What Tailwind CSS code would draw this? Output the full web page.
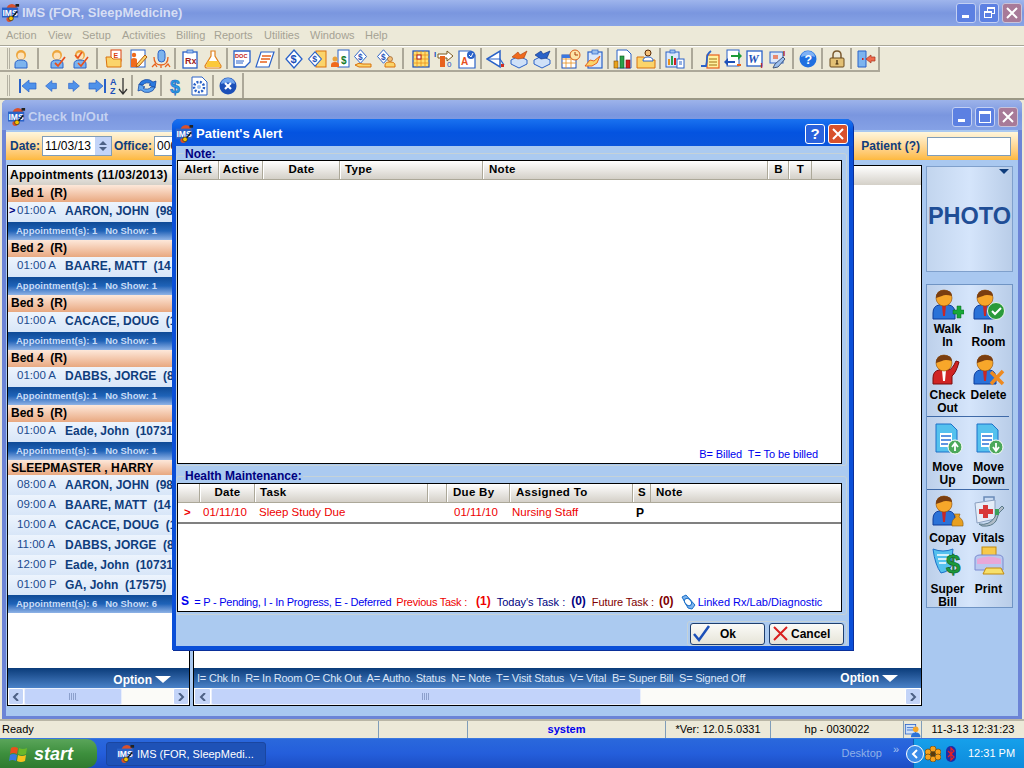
<!DOCTYPE html>
<html lang="en">
<head>
<meta charset="UTF-8">
<title>IMS (FOR, SleepMedicine)</title>
<script src="https://cdn.jsdelivr.net/npm/@tailwindcss/browser@4"></script>
</head>
<body class="bg-[#ece9d8]">
<!-- shared icons -->
<svg class="hidden" width="0" height="0">
  <defs>
    <symbol id="ims" viewBox="0 0 20 20"><circle cx="11" cy="6" r="6" fill="#d9512c"/><circle cx="8" cy="17" r="3" fill="#d9512c"/><rect x="0" y="4" width="18" height="11" fill="#2a62c8"/><text x="0.5" y="13.5" font-size="9.5" font-weight="700" fill="#fff" font-family="Liberation Sans">IMS</text><circle cx="10" cy="16" r="2.6" fill="#f5c400" stroke="#222" stroke-width=".7"/><path d="M12 14l5-6" stroke="#111" stroke-width="1.6"/><rect x="15" y="0" width="4" height="3" fill="#222"/></symbol>
    <symbol id="nurse" viewBox="0 0 20 20"><circle cx="10" cy="6" r="5" fill="#eda63e"/><circle cx="10" cy="7" r="3.4" fill="#fde3ba"/><path d="M4 19v-4q0-4 6-4t6 4v4z" fill="#7db4ee" stroke="#2a62c8"/></symbol>
    <symbol id="nursecheck" viewBox="0 0 20 20"><use href="#nurse"/><path d="M8 14l3 3 7-9" fill="none" stroke="#e8501c" stroke-width="1.8"/></symbol>
    <symbol id="nursecheck2" viewBox="0 0 20 20"><use href="#nurse"/><path d="M5 6l3 3 4-6M8 14l3 3 7-9" fill="none" stroke="#e8501c" stroke-width="1.6"/></symbol>
    <symbol id="folder" viewBox="0 0 20 20"><rect x="6" y="1" width="10" height="11" fill="#fff" stroke="#d9400d"/><text x="8.5" y="9" font-size="7" font-weight="700" fill="#d9400d" font-family="Liberation Sans">E</text><path d="M1 8h5l2 2h8v8H2z" fill="#fbd46a" stroke="#d9730d"/></symbol>
    <symbol id="personpen" viewBox="0 0 20 20"><rect x="3" y="1" width="14" height="17" fill="#fff" stroke="#2a62c8"/><circle cx="6" cy="6" r="2.2" fill="#f06a1c"/><path d="M3 18V11q0-2 3-2t3 2v7z" fill="#f06a1c"/><path d="M9 15l8-9 2 2-8 9-3 1z" fill="#fbd46a" stroke="#b4590d"/></symbol>
    <symbol id="mic" viewBox="0 0 20 20"><rect x="7" y="1" width="7" height="12" rx="3.5" fill="#7db4ee" stroke="#2a62c8"/><path d="M3 8q0 8 7 8t7-8M10 16v3M1 18l3-3 2 3M14 18l3-3 2 3" fill="none" stroke="#e8621c" stroke-width="1.3"/></symbol>
    <symbol id="rx" viewBox="0 0 20 20"><rect x="3" y="3" width="14" height="16" fill="#fff" stroke="#2a62c8" stroke-width="1.3"/><rect x="7" y="1" width="6" height="3" fill="#9dc0ee" stroke="#2a62c8" stroke-width=".7"/><text x="5" y="15" font-size="9" font-weight="700" fill="#a01c1c" font-family="Liberation Sans">Rx</text></symbol>
    <symbol id="flask" viewBox="0 0 20 20"><path d="M8 2h4v5l6 10q0 2-2 2H4q-2 0-2-2L8 7z" fill="#fff" stroke="#e0801c" stroke-width="1.2"/><path d="M5 12h10l2.500 5q0 1-1 1H4q-1 0-1-1z" fill="#fbc93a"/></symbol>
    <symbol id="doc" viewBox="0 0 20 20"><path d="M2 2h16v11l-5 5H2z" fill="#fff" stroke="#2a62c8" stroke-width="1.3"/><text x="3" y="9" font-size="5.600" font-weight="700" fill="#c02020" font-family="Liberation Sans">DOC</text><path d="M4 12h8M4 14h7" stroke="#2a62c8"/></symbol>
    <symbol id="note" viewBox="0 0 20 20"><path d="M6 3h13l-5 15H1z" fill="#fff" stroke="#2a62c8" stroke-width="1.200"/><path d="M7 7h9M6 10h9M5 13h7" stroke="#e8621c" stroke-width="1.300"/></symbol>
    <symbol id="ddiamond" viewBox="0 0 20 20"><path d="M10 1l8 9-8 9-8-9z" fill="#fff" stroke="#2a62c8" stroke-width="1.300"/><text x="6.500" y="14" font-size="11" font-weight="700" fill="#1c50b8" font-family="Liberation Sans">$</text></symbol>
    <symbol id="ddoc" viewBox="0 0 20 20"><rect x="9" y="2" width="10" height="16" fill="#fbd46a" stroke="#d9730d"/><use href="#ddiamond" width="16" height="18" y="1"/></symbol>
    <symbol id="pdollar" viewBox="0 0 20 20"><rect x="8" y="1" width="11" height="17" fill="#fff" stroke="#2a62c8"/><text x="11" y="15" font-size="10" font-weight="700" fill="#137a2a" font-family="Liberation Sans">$</text><circle cx="5" cy="10" r="2.500" fill="#e8a33d"/><path d="M1 18v-2q0-3 4-3t4 3v2z" fill="#f06a1c"/></symbol>
    <symbol id="dhand" viewBox="0 0 20 20"><use href="#ddiamond" width="15" height="15"/><path d="M2 16q4-3 8-1h8v3H6z" fill="#fbd46a" stroke="#d9730d"/></symbol>
    <symbol id="dperson" viewBox="0 0 20 20"><use href="#ddiamond" width="15" height="15"/><circle cx="14" cy="10" r="2.500" fill="#f4c078" stroke="#8a4a10" stroke-width=".6"/><path d="M9 18v-2q0-3 5-3t5 3v2z" fill="#fbd46a" stroke="#d9730d"/></symbol>
    <symbol id="grid" viewBox="0 0 20 20"><rect x="2" y="2" width="16" height="16" fill="#ffdf70" stroke="#1c50b8" stroke-width="1.200"/><path d="M2 6h16M2 10h16M2 14h16M6 2v16M10 2v16M14 2v16" stroke="#e8901c" stroke-width=".8"/><rect x="6" y="6" width="4" height="4" fill="#fff" stroke="#b01c1c"/></symbol>
    <symbol id="flow" viewBox="0 0 20 20"><text x="0" y="8" font-size="8" font-weight="700" fill="#1c50b8" font-family="Liberation Sans">I</text><text x="13" y="18" font-size="8" fill="#1c50b8" font-family="Liberation Sans">0</text><path d="M4 5h9V2l6 5-6 5V9H4z" fill="#fff" stroke="#7a5a20"/><rect x="6" y="7" width="5" height="11" fill="#e8621c"/></symbol>
    <symbol id="adoc" viewBox="0 0 20 20"><path d="M2 2h12l4 4v13H2z" fill="#fff" stroke="#2a62c8" stroke-width="1.200"/><text x="4" y="16" font-size="10" font-weight="700" fill="#e8501c" font-family="Liberation Sans">A</text><circle cx="14" cy="6" r="4" fill="#2a62c8"/><path d="M12 6l2 2 2-4" stroke="#fff" fill="none"/></symbol>
    <symbol id="envelope" viewBox="0 0 20 20"><path d="M1 10L14 2v16z" fill="#fff" stroke="#2a62c8" stroke-width="1.500"/><path d="M1 10h13l4 6" fill="none" stroke="#2a62c8" stroke-width="1.200"/><rect x="15" y="15" width="3" height="3" fill="#d03020"/></symbol>
    <symbol id="box1" viewBox="0 0 20 20"><path d="M10 7l8 4v4l-8 4-8-4v-4z" fill="#cfe1f8" stroke="#2a62c8"/><path d="M3 8l6-5 2 3 7-4-3 7-6 1z" fill="#f06a1c" stroke="#a83c08" stroke-width=".6"/></symbol>
    <symbol id="box2" viewBox="0 0 20 20"><path d="M10 7l8 4v4l-8 4-8-4v-4z" fill="#cfe1f8" stroke="#2a62c8"/><path d="M3 6l6-4 2 3 7-3-3 7-6 1z" fill="#2a62c8" stroke="#0c2d7a" stroke-width=".6"/></symbol>
    <symbol id="calclock" viewBox="0 0 20 20"><rect x="1" y="6" width="14" height="13" fill="#fff" stroke="#1c50b8"/><path d="M1 10h14M1 14h14M5 6v13M10 6v13" stroke="#e8901c" stroke-width=".8"/><rect x="1" y="6" width="14" height="3" fill="#3a78e0"/><circle cx="14" cy="6" r="5" fill="#fde4a8" stroke="#d9601c"/><path d="M14 3v3h3" stroke="#a83c08" fill="none"/></symbol>
    <symbol id="clip" viewBox="0 0 20 20"><rect x="4" y="3" width="14" height="16" fill="#dbe8fa" stroke="#2a62c8" stroke-width="1.200"/><rect x="8" y="1" width="6" height="4" fill="#9dc0ee" stroke="#2a62c8" stroke-width=".7"/><path d="M1 17l5-6 4 1 6-5-3 7-5 3z" fill="#fbd46a" stroke="#e8621c"/></symbol>
    <symbol id="chart" viewBox="0 0 20 20"><path d="M4 1h10l4 4v14H4z" fill="#fff" stroke="#2a62c8"/><rect x="1" y="12" width="4" height="7" fill="#e8a31c" stroke="#7a4a08" stroke-width=".6"/><rect x="7" y="7" width="4" height="12" fill="#2aa04a" stroke="#0b5a1f" stroke-width=".6"/><rect x="13" y="11" width="4" height="8" fill="#d02020" stroke="#7a0c0c" stroke-width=".6"/></symbol>
    <symbol id="fperson" viewBox="0 0 20 20"><path d="M1 8h7l2 3h9v8H1z" fill="#fbd46a" stroke="#d9730d"/><circle cx="12" cy="4" r="3" fill="#f4c078" stroke="#5a2a08"/><path d="M7 12q0-4 5-4t5 4z" fill="#fff" stroke="#2a62c8"/></symbol>
    <symbol id="clipchart" viewBox="0 0 20 20"><rect x="1" y="3" width="13" height="15" fill="#dbe8fa" stroke="#2a62c8"/><rect x="5" y="1" width="5" height="3" fill="#9dc0ee" stroke="#2a62c8" stroke-width=".7"/><rect x="3" y="10" width="2" height="6" fill="#e8901c"/><rect x="6" y="7" width="2" height="9" fill="#2aa04a"/><rect x="9" y="9" width="2" height="7" fill="#d02020"/><rect x="12" y="10" width="7" height="9" fill="#fff" stroke="#2a62c8"/><path d="M14 13h3M14 15h3" stroke="#2a62c8"/></symbol>
    <symbol id="hookdoc" viewBox="0 0 20 20"><rect x="7" y="6" width="12" height="13" fill="#fff2a0" stroke="#e8601c" stroke-width="1.200"/><path d="M9 10h8M9 13h8M9 16h8" stroke="#a07010"/><path d="M1 17h5q1-4 1-8t4-7" fill="none" stroke="#2a62c8" stroke-width="1.800"/></symbol>
    <symbol id="arrows" viewBox="0 0 20 20"><rect x="4" y="1" width="12" height="16" fill="#fff" stroke="#2a62c8"/><path d="M8 6h7V3l4 4-4 4V8H8z" fill="#1c9a3a"/><path d="M12 12H5V9l-4 4 4 4v-3h7z" fill="#1c50b8"/><rect x="14" y="15" width="4" height="2" fill="#e8601c"/></symbol>
    <symbol id="word" viewBox="0 0 20 20"><rect x="1" y="2" width="15" height="15" fill="#fff" stroke="#2a62c8" stroke-width="1.300"/><text x="2" y="14" font-size="12" font-weight="700" font-style="italic" fill="#1c50b8" font-family="Liberation Serif">W</text><text x="14.500" y="19" font-size="8" font-weight="700" fill="#c02020" font-family="Liberation Sans">I</text></symbol>
    <symbol id="paint" viewBox="0 0 20 20"><rect x="1" y="3" width="13" height="11" fill="#dbe8fa" stroke="#2a62c8"/><rect x="4" y="6" width="5" height="4" fill="#e88a70"/><path d="M4 19l2-4 8-7 2 2-7 8z" fill="#9dc0ee" stroke="#44587a"/><text x="14" y="7" font-size="8" font-weight="700" fill="#c02020" font-family="Liberation Sans">I</text></symbol>
    <symbol id="help" viewBox="0 0 20 20"><circle cx="10" cy="10" r="8.500" fill="#1f6fe0"/><path d="M3 8a7 6 0 0 1 14 0q-7-3-14 0" fill="#7fb2f5"/><text x="6.600" y="15" font-size="12.500" font-weight="700" fill="#fff" font-family="Liberation Sans">?</text></symbol>
    <symbol id="lock" viewBox="0 0 20 20"><path d="M6 9V6q0-4 4-4t4 4v3" fill="none" stroke="#7a5a30" stroke-width="1.500"/><rect x="3" y="9" width="14" height="9" rx="1" fill="#e3c074" stroke="#6a4a1c"/><path d="M10 11v4M8.500 15h3" stroke="#3a2408" stroke-width="1.200"/></symbol>
    <symbol id="door" viewBox="0 0 20 20"><path d="M2 2h8v16H2z" fill="#7db4ee" stroke="#2a62c8"/><rect x="6" y="9" width="1.500" height="2" fill="#d02020"/><path d="M10 10l5-4v2h4v4h-4v2z" fill="#f06a4c" stroke="#a8301c" stroke-width=".7"/></symbol>
    <symbol id="first" viewBox="0 0 20 20"><rect x="1" y="3" width="2" height="14" fill="#2a62c8"/><path d="M4 10l7-6v3h7v6h-7v3z" fill="#4f92ea" stroke="#2a62c8" stroke-width=".7"/></symbol>
    <symbol id="prev" viewBox="0 0 20 20"><path d="M4 10l7-6v3h5v6h-5v3z" fill="#4f92ea" stroke="#2a62c8" stroke-width=".7"/></symbol>
    <symbol id="next" viewBox="0 0 20 20"><path d="M16 10L9 4v3H4v6h5v3z" fill="#4f92ea" stroke="#2a62c8" stroke-width=".7"/></symbol>
    <symbol id="last" viewBox="0 0 20 20"><rect x="17" y="3" width="2" height="14" fill="#2a62c8"/><path d="M16 10L9 4v3H2v6h7v3z" fill="#4f92ea" stroke="#2a62c8" stroke-width=".7"/></symbol>
    <symbol id="sort" viewBox="0 0 20 20"><text x="1" y="9" font-size="9" font-weight="700" fill="#1c50b8" font-family="Liberation Sans">A</text><text x="1" y="18" font-size="9" font-weight="700" fill="#1c50b8" font-family="Liberation Sans">Z</text><path d="M14 2v15M10 13l4 5 4-5" fill="none" stroke="#333" stroke-width="1.300"/></symbol>
    <symbol id="refresh" viewBox="0 0 20 20"><path d="M2 9a8 7 0 0 1 14-3l3-1-1 7-6-3 2-1a5 4 0 0 0-8 1z" fill="#2a7ae0" stroke="#0c3d9a" stroke-width=".7"/><path d="M18 11a8 7 0 0 1-14 3l-3 1 1-7 6 3-2 1a5 4 0 0 0 8-1z" fill="#5fa5f0" stroke="#0c3d9a" stroke-width=".7"/></symbol>
    <symbol id="dollar" viewBox="0 0 20 20"><text x="4" y="17" font-size="18" font-weight="700" fill="#2a9ae8" stroke="#1560b8" stroke-width=".5" font-family="Liberation Sans">$</text></symbol>
    <symbol id="gear" viewBox="0 0 20 20"><path d="M3 1h10l5 5v13H3z" fill="#fff" stroke="#2a62c8"/><circle cx="10" cy="11" r="5" fill="none" stroke="#2a62c8" stroke-width="2.500" stroke-dasharray="2 1.400"/><circle cx="10" cy="11" r="2" fill="#9dc0ee"/></symbol>
    <symbol id="close" viewBox="0 0 20 20"><circle cx="10" cy="10" r="8.500" fill="#1c50b8"/><path d="M3 8a7 6 0 0 1 14 0q-7-3-14 0" fill="#6fa4ee"/><path d="M7 7l6 6M13 7l-6 6" stroke="#fff" stroke-width="2.200"/></symbol>
    <!-- side panel figures -->
    <symbol id="man" viewBox="0 0 32 32"><path d="M1 30v-6q0-7 6-8l5-1 5 1q6 1 6 8v6z" fill="#2a72d8" stroke="#0f3d9a"/><path d="M10 16h4l-1 11h-2z" fill="#c82828"/><circle cx="12" cy="9" r="8" fill="#f7a72a" stroke="#8a4a08" stroke-width=".6"/><path d="M4 9q0-8 8-8t8 6q-7-2-10 0-3 1-6 2" fill="#7a3e10"/></symbol>
    <symbol id="redman" viewBox="0 0 32 32"><path d="M1 30v-6q0-7 6-8l5-1 4 1q4 0 8-9l3 1q-3 11-7 14v8z" fill="#d02424" stroke="#7a0c0c"/><path d="M10 16h4l-1 11h-2z" fill="#fff"/><circle cx="12" cy="9" r="8" fill="#f7a72a" stroke="#8a4a08" stroke-width=".6"/><path d="M4 9q0-8 8-8t8 6q-7-2-10 0-3 1-6 2" fill="#7a3e10"/></symbol>
    <symbol id="moveup" viewBox="0 0 32 32"><path d="M4 1h15l6 6v22H4z" fill="#55c1ee" stroke="#1c70c8"/><path d="M8 10h12v14H8z" fill="#fff"/><path d="M9 13h10M9 17h10M9 21h7" stroke="#2a72d8" stroke-width="1.500"/><circle cx="23" cy="24" r="7" fill="#4ca85a" stroke="#fff"/><path d="M23 28v-7M20 24l3-4 3 4" stroke="#fff" stroke-width="1.800" fill="none"/></symbol>
    <symbol id="movedown" viewBox="0 0 32 32"><path d="M4 1h15l6 6v22H4z" fill="#55c1ee" stroke="#1c70c8"/><path d="M8 10h12v14H8z" fill="#fff"/><path d="M9 13h10M9 17h10M9 21h7" stroke="#2a72d8" stroke-width="1.500"/><circle cx="23" cy="24" r="7" fill="#4ca85a" stroke="#fff"/><path d="M23 20v7M20 24l3 4 3-4" stroke="#fff" stroke-width="1.800" fill="none"/></symbol>
    <symbol id="kit" viewBox="0 0 32 32"><path d="M11 6V2h10v4" fill="none" stroke="#6a8ab8" stroke-width="1.500"/><path d="M2 8l20-3v19L4 28z" fill="#e5ecf7" stroke="#8aa0c0"/><path d="M10 10h5v4h5v5h-5v4h-5v-4H6v-5h4z" fill="#d83838"/><path d="M6 29q10 2 16-7l2-6 5-5 2 2-5 5-3 8q-4 6-14 5z" fill="#b0bcc8" stroke="#5a7a8a"/><rect x="22" y="14" width="4" height="6" fill="#3aa05a"/></symbol>
    <symbol id="bill" viewBox="0 0 32 32"><path d="M1 3q10 4 20 0l-2 18q-5 6-10 6-6-8-8-24z" fill="#55c1ee" stroke="#1c70c8"/><path d="M5 9h12M6 13h10M7 17h7" stroke="#fff" stroke-width="1.500"/><text x="14" y="27" font-size="26" font-weight="700" fill="#1c9a3a" stroke="#0b5a1f" stroke-width=".6" font-family="Liberation Sans">$</text></symbol>
    <symbol id="printer" viewBox="0 0 32 32"><rect x="9" y="1" width="14" height="11" fill="#f7c94a" stroke="#c08a10"/><path d="M2 13q0-4 5-4h18q5 0 5 4v11H2z" fill="#b9c8f0" stroke="#7a8ad0"/><path d="M4 13q12-5 24 0v5H4z" fill="#e8a8d8"/><path d="M13 22h15l3 6H10z" fill="#f7e06a" stroke="#c08a10"/></symbol>
  </defs>
</svg>

<div class="w-[1024px] h-[768px] overflow-hidden relative flex flex-col bg-[#ece9d8] text-[11px] text-black font-['Liberation_Sans',sans-serif]">

  <!-- app title bar -->
  <div class="h-[26px] shrink-0 flex items-center pl-[2px] pr-[2px] bg-linear-to-b from-[#9fb5ec] via-[#7a96df] to-[#88a4e6]">
    <svg class="w-[18px] h-[18px]"><use href="#ims"/></svg>
    <span class="ml-[2px] text-[13px] font-bold text-[#d6def4]">IMS (FOR, SleepMedicine)</span>
    <div class="ml-auto flex gap-[3px]">
      <div class="w-[20px] h-[20px] rounded-[3px] border border-[#c3d0f3] bg-[#5c80e2] flex items-end pl-[5px] pb-[4px]"><div class="w-[7px] h-[3px] bg-white"></div></div>
      <div class="w-[20px] h-[20px] rounded-[3px] border border-[#c3d0f3] bg-[#5c80e2] relative"><div class="absolute left-[7px] top-[3px] w-[8px] h-[7px] border border-white border-t-2"></div><div class="absolute left-[4px] top-[7px] w-[8px] h-[7px] border border-white border-t-2 bg-[#5c80e2]"></div></div>
      <div class="w-[20px] h-[20px] rounded-[3px] border border-[#c9c3d9] bg-[#a87a98] flex items-center justify-center"><svg class="w-[12px] h-[12px]" viewBox="0 0 12 12"><path d="M1 1l10 10M11 1L1 11" stroke="#fff" stroke-width="2"/></svg></div>
    </div>
  </div>

  <!-- menu -->
  <div class="h-[19px] shrink-0 flex items-center text-[#a5a294] text-[11px]">
    <span class="ml-[6px] w-[42px]">Action</span><span class="w-[34px]">View</span><span class="w-[40px]">Setup</span><span class="w-[54px]">Activities</span><span class="w-[38px]">Billing</span><span class="w-[50px]">Reports</span><span class="w-[46px]">Utilities</span><span class="w-[55px]">Windows</span><span>Help</span>
  </div>
  <div class="h-[2px] shrink-0 bg-[#a8a698] border-b border-white"></div>

  <!-- toolbar 1 -->
  <div class="h-[25px] shrink-0 flex items-center w-[880px] pl-[7px] border-r-2 border-b-2 border-[#aca899]">
    <div class="w-[3px] h-[21px] mr-[0px] border-x border-[#b5b2a3]"></div>
    <div class="w-[21px] flex justify-center"><svg class="w-[20px] h-[20px]"><use href="#nurse"/></svg></div>
    <div class="w-[2px] h-[21px] bg-[#aca899] mx-[6px]"></div>
    <div class="w-[23px] flex justify-center"><svg class="w-[20px] h-[20px]"><use href="#nursecheck"/></svg></div>
    <div class="w-[23px] flex justify-center"><svg class="w-[20px] h-[20px]"><use href="#nursecheck2"/></svg></div>
    <div class="w-[2px] h-[21px] bg-[#aca899] mx-[5px]"></div>
    <div class="w-[23px] flex justify-center"><svg class="w-[20px] h-[20px]"><use href="#folder"/></svg></div>
    <div class="w-[23px] flex justify-center"><svg class="w-[20px] h-[20px]"><use href="#personpen"/></svg></div>
    <div class="w-[23px] flex justify-center"><svg class="w-[20px] h-[20px]"><use href="#mic"/></svg></div>
    <div class="w-[2px] h-[21px] bg-[#aca899] mx-[2px]"></div>
    <div class="w-[23px] flex justify-center"><svg class="w-[20px] h-[20px]"><use href="#rx"/></svg></div>
    <div class="w-[23px] flex justify-center"><svg class="w-[20px] h-[20px]"><use href="#flask"/></svg></div>
    <div class="w-[2px] h-[21px] bg-[#aca899] mx-[2px]"></div>
    <div class="w-[23px] flex justify-center"><svg class="w-[20px] h-[20px]"><use href="#doc"/></svg></div>
    <div class="w-[23px] flex justify-center"><svg class="w-[20px] h-[20px]"><use href="#note"/></svg></div>
    <div class="w-[2px] h-[21px] bg-[#aca899] mx-[2px]"></div>
    <div class="w-[23px] flex justify-center"><svg class="w-[20px] h-[20px]"><use href="#ddiamond"/></svg></div>
    <div class="w-[23px] flex justify-center"><svg class="w-[20px] h-[20px]"><use href="#ddoc"/></svg></div>
    <div class="w-[23px] flex justify-center"><svg class="w-[20px] h-[20px]"><use href="#pdollar"/></svg></div>
    <div class="w-[23px] flex justify-center"><svg class="w-[20px] h-[20px]"><use href="#dhand"/></svg></div>
    <div class="w-[23px] flex justify-center"><svg class="w-[20px] h-[20px]"><use href="#dperson"/></svg></div>
    <div class="w-[2px] h-[21px] bg-[#aca899] mx-[5px]"></div>
    <div class="w-[23px] flex justify-center"><svg class="w-[20px] h-[20px]"><use href="#grid"/></svg></div>
    <div class="w-[23px] flex justify-center"><svg class="w-[20px] h-[20px]"><use href="#flow"/></svg></div>
    <div class="w-[23px] flex justify-center"><svg class="w-[20px] h-[20px]"><use href="#adoc"/></svg></div>
    <div class="w-[2px] h-[21px] bg-[#aca899] mx-[2px]"></div>
    <div class="w-[23px] flex justify-center"><svg class="w-[20px] h-[20px]"><use href="#envelope"/></svg></div>
    <div class="w-[23px] flex justify-center"><svg class="w-[20px] h-[20px]"><use href="#box1"/></svg></div>
    <div class="w-[23px] flex justify-center"><svg class="w-[20px] h-[20px]"><use href="#box2"/></svg></div>
    <div class="w-[2px] h-[21px] bg-[#aca899] mx-[2px]"></div>
    <div class="w-[23px] flex justify-center"><svg class="w-[20px] h-[20px]"><use href="#calclock"/></svg></div>
    <div class="w-[23px] flex justify-center"><svg class="w-[20px] h-[20px]"><use href="#clip"/></svg></div>
    <div class="w-[2px] h-[21px] bg-[#aca899] mx-[2px]"></div>
    <div class="w-[23px] flex justify-center"><svg class="w-[20px] h-[20px]"><use href="#chart"/></svg></div>
    <div class="w-[23px] flex justify-center"><svg class="w-[20px] h-[20px]"><use href="#fperson"/></svg></div>
    <div class="w-[2px] h-[21px] bg-[#aca899] mx-[2px]"></div>
    <div class="w-[23px] flex justify-center"><svg class="w-[20px] h-[20px]"><use href="#clipchart"/></svg></div>
    <div class="w-[2px] h-[21px] bg-[#aca899] mx-[5px]"></div>
    <div class="w-[23px] flex justify-center"><svg class="w-[20px] h-[20px]"><use href="#hookdoc"/></svg></div>
    <div class="w-[23px] flex justify-center"><svg class="w-[20px] h-[20px]"><use href="#arrows"/></svg></div>
    <div class="w-[23px] flex justify-center"><svg class="w-[20px] h-[20px]"><use href="#word"/></svg></div>
    <div class="w-[23px] flex justify-center"><svg class="w-[20px] h-[20px]"><use href="#paint"/></svg></div>
    <div class="w-[2px] h-[21px] bg-[#aca899] mx-[2px]"></div>
    <div class="w-[23px] flex justify-center"><svg class="w-[20px] h-[20px]"><use href="#help"/></svg></div>
    <div class="w-[2px] h-[21px] bg-[#aca899] mx-[2px]"></div>
    <div class="w-[23px] flex justify-center"><svg class="w-[20px] h-[20px]"><use href="#lock"/></svg></div>
    <div class="w-[2px] h-[21px] bg-[#aca899] mx-[2px]"></div>
    <div class="w-[23px] flex justify-center"><svg class="w-[20px] h-[20px]"><use href="#door"/></svg></div>
  </div>
  <div class="h-px shrink-0 bg-[#ece9d8]"></div>

  <!-- toolbar 2 -->
  <div class="h-[25px] shrink-0 flex items-center w-[244px] pl-[7px] border-r-2 border-[#aca899]">
    <div class="w-[3px] h-[21px] mr-[6px] border-x border-[#b5b2a3]"></div>
    <div class="w-[23px] flex justify-center"><svg class="w-[20px] h-[20px]"><use href="#first"/></svg></div>
    <div class="w-[23px] flex justify-center"><svg class="w-[18px] h-[18px]"><use href="#prev"/></svg></div>
    <div class="w-[23px] flex justify-center"><svg class="w-[18px] h-[18px]"><use href="#next"/></svg></div>
    <div class="w-[23px] flex justify-center"><svg class="w-[20px] h-[20px]"><use href="#last"/></svg></div>
    <div class="w-[21px] flex justify-center"><svg class="w-[20px] h-[20px]"><use href="#sort"/></svg></div>
    <div class="w-[2px] h-[21px] bg-[#aca899] mx-[2px]"></div>
    <div class="w-[23px] flex justify-center"><svg class="w-[20px] h-[20px]"><use href="#refresh"/></svg></div>
    <div class="w-[2px] h-[21px] bg-[#aca899] mx-[2px]"></div>
    <div class="w-[23px] flex justify-center"><svg class="w-[20px] h-[20px]"><use href="#dollar"/></svg></div>
    <div class="w-[23px] flex justify-center"><svg class="w-[20px] h-[20px]"><use href="#gear"/></svg></div>
    <div class="w-[2px] h-[21px] bg-[#aca899] mx-[2px]"></div>
    <div class="w-[23px] flex justify-center"><svg class="w-[20px] h-[20px]"><use href="#close"/></svg></div>
  </div>
  <div class="h-[2px] shrink-0 bg-[#9a9886]"></div>

  <!-- Check In/Out child window -->
  <div class="h-[619px] shrink-0 mx-[2px] flex flex-col rounded-t-[5px] bg-[#6c84d6]">
    <div class="h-[30px] shrink-0 flex items-center pt-[4px] pl-[6px] pr-[4px] rounded-t-[5px] bg-linear-to-b from-[#9db3ea] via-[#7a96df] to-[#85a1e5]">
      <svg class="w-[18px] h-[18px]"><use href="#ims"/></svg>
      <span class="ml-[2px] text-[13px] font-bold text-[#c4d1f1]">Check In/Out</span>
      <div class="ml-auto flex gap-[3px]">
        <div class="w-[20px] h-[20px] rounded-[3px] border border-[#c3d0f3] bg-[#5c80e2] flex items-end pl-[5px] pb-[4px]"><div class="w-[7px] h-[3px] bg-white"></div></div>
        <div class="w-[20px] h-[20px] rounded-[3px] border border-[#c3d0f3] bg-[#5c80e2] p-[3px]"><div class="w-full h-full border border-white border-t-[3px]"></div></div>
        <div class="w-[20px] h-[20px] rounded-[3px] border border-[#c9c3d9] bg-[#a87a98] flex items-center justify-center"><svg class="w-[12px] h-[12px]" viewBox="0 0 12 12"><path d="M1 1l10 10M11 1L1 11" stroke="#fff" stroke-width="2"/></svg></div>
      </div>
    </div>

    <div class="ml-[4px] mr-[4px] mb-[3px] flex-1 min-h-0 flex flex-col bg-[#a9c8f0]">
      <!-- date strip -->
      <div class="h-[28px] mt-[2px] shrink-0 flex items-center bg-linear-to-b from-[#fff6dc] to-[#fdb93d] text-[#0f3d7c] font-bold text-[12px]">
        <span class="ml-[4px]">Date:</span>
        <div class="ml-[2px] w-[70px] h-[20px] bg-white border border-[#7f9db9] flex items-center pl-[2px] text-[12px] font-normal text-black">11/03/13<div class="ml-auto w-[16px] h-full bg-[#c3d4f8] flex flex-col items-center justify-center gap-[2px]"><div class="w-0 h-0 border-x-[4px] border-x-transparent border-b-[4px] border-b-[#4d6185]"></div><div class="w-0 h-0 border-x-[4px] border-x-transparent border-t-[4px] border-t-[#4d6185]"></div></div></div>
        <span class="ml-[2px]">Office:</span>
        <div class="ml-[2px] w-[40px] h-[20px] bg-white border border-[#7f9db9] pl-[2px] text-[12px] font-normal text-black">000</div>
        <span class="ml-auto">Patient (?)</span>
        <div class="ml-[7px] mr-[7px] w-[84px] h-[19px] bg-white border border-[#7f9db9]"></div>
      </div>

      <div class="h-[541px] mt-[5px] shrink-0 flex pl-[1px]">
        <!-- appointments list -->
        <div class="w-[183px] h-full border border-black flex flex-col bg-white overflow-hidden">
          <div class="h-[19px] shrink-0 flex items-center pl-[2px] pb-[2px] font-bold text-[12px] tracking-[0.25px] whitespace-nowrap bg-linear-to-b from-white to-[#d4d0c8]">Appointments (11/03/2013)</div>

          <div class="h-[17px] shrink-0 flex items-center pl-[3px] pb-[2px] font-bold text-[12px] bg-linear-to-b from-[#fde8da] to-[#e8a880]">Bed 1&nbsp; (R)</div>
          <div class="h-[20px] shrink-0 flex items-center pb-[3px] text-[#1a4a8e] bg-linear-to-b from-[#edf4fd] to-[#d8e6f8] whitespace-nowrap"><span class="w-[9px] pl-[1px] font-bold text-[#000080]">&gt;</span><span class="w-[48px] text-[11.500px]">01:00 A</span><span class="font-bold text-[12px] text-[#0f3d7c]">AARON, JOHN&nbsp; (98</span></div>
          <div class="h-[18px] shrink-0 flex items-center pl-[8px] font-bold text-[9.500px] text-[#c9dcf6] bg-linear-to-b from-[#0e4a96] via-[#1f63b8] to-[#8fb3e6] whitespace-pre">Appointment(s): 1   No Show: 1</div>

          <div class="h-[17px] shrink-0 flex items-center pl-[3px] pb-[2px] font-bold text-[12px] bg-linear-to-b from-[#fde8da] to-[#e8a880]">Bed 2&nbsp; (R)</div>
          <div class="h-[20px] shrink-0 flex items-center pb-[3px] text-[#1a4a8e] bg-linear-to-b from-[#edf4fd] to-[#d8e6f8] whitespace-nowrap"><span class="w-[9px]"></span><span class="w-[48px] text-[11.500px]">01:00 A</span><span class="font-bold text-[12px] text-[#0f3d7c]">BAARE, MATT&nbsp; (14</span></div>
          <div class="h-[18px] shrink-0 flex items-center pl-[8px] font-bold text-[9.500px] text-[#c9dcf6] bg-linear-to-b from-[#0e4a96] via-[#1f63b8] to-[#8fb3e6] whitespace-pre">Appointment(s): 1   No Show: 1</div>

          <div class="h-[17px] shrink-0 flex items-center pl-[3px] pb-[2px] font-bold text-[12px] bg-linear-to-b from-[#fde8da] to-[#e8a880]">Bed 3&nbsp; (R)</div>
          <div class="h-[20px] shrink-0 flex items-center pb-[3px] text-[#1a4a8e] bg-linear-to-b from-[#edf4fd] to-[#d8e6f8] whitespace-nowrap"><span class="w-[9px]"></span><span class="w-[48px] text-[11.500px]">01:00 A</span><span class="font-bold text-[12px] text-[#0f3d7c]">CACACE, DOUG&nbsp; (1</span></div>
          <div class="h-[18px] shrink-0 flex items-center pl-[8px] font-bold text-[9.500px] text-[#c9dcf6] bg-linear-to-b from-[#0e4a96] via-[#1f63b8] to-[#8fb3e6] whitespace-pre">Appointment(s): 1   No Show: 1</div>

          <div class="h-[17px] shrink-0 flex items-center pl-[3px] pb-[2px] font-bold text-[12px] bg-linear-to-b from-[#fde8da] to-[#e8a880]">Bed 4&nbsp; (R)</div>
          <div class="h-[20px] shrink-0 flex items-center pb-[3px] text-[#1a4a8e] bg-linear-to-b from-[#edf4fd] to-[#d8e6f8] whitespace-nowrap"><span class="w-[9px]"></span><span class="w-[48px] text-[11.500px]">01:00 A</span><span class="font-bold text-[12px] text-[#0f3d7c]">DABBS, JORGE&nbsp; (8</span></div>
          <div class="h-[18px] shrink-0 flex items-center pl-[8px] font-bold text-[9.500px] text-[#c9dcf6] bg-linear-to-b from-[#0e4a96] via-[#1f63b8] to-[#8fb3e6] whitespace-pre">Appointment(s): 1   No Show: 1</div>

          <div class="h-[17px] shrink-0 flex items-center pl-[3px] pb-[2px] font-bold text-[12px] bg-linear-to-b from-[#fde8da] to-[#e8a880]">Bed 5&nbsp; (R)</div>
          <div class="h-[20px] shrink-0 flex items-center pb-[3px] text-[#1a4a8e] bg-linear-to-b from-[#edf4fd] to-[#d8e6f8] whitespace-nowrap"><span class="w-[9px]"></span><span class="w-[48px] text-[11.500px]">01:00 A</span><span class="font-bold text-[12px] text-[#0f3d7c]">Eade, John&nbsp; (10731</span></div>
          <div class="h-[18px] shrink-0 flex items-center pl-[8px] font-bold text-[9.500px] text-[#c9dcf6] bg-linear-to-b from-[#0e4a96] via-[#1f63b8] to-[#8fb3e6] whitespace-pre">Appointment(s): 1   No Show: 1</div>

          <div class="h-[15px] shrink-0 flex items-center pl-[3px] font-bold text-[12px] bg-linear-to-b from-[#fde8da] to-[#e8a880]">SLEEPMASTER , HARRY</div>
          <div class="h-[20px] shrink-0 flex items-center text-[#1a4a8e] bg-linear-to-b from-[#edf4fd] to-[#d8e6f8] whitespace-nowrap"><span class="w-[9px]"></span><span class="w-[48px] text-[11.500px]">08:00 A</span><span class="font-bold text-[12px] text-[#0f3d7c]">AARON, JOHN&nbsp; (98</span></div>
          <div class="h-[20px] shrink-0 flex items-center text-[#1a4a8e] bg-linear-to-b from-[#edf4fd] to-[#d8e6f8] whitespace-nowrap"><span class="w-[9px]"></span><span class="w-[48px] text-[11.500px]">09:00 A</span><span class="font-bold text-[12px] text-[#0f3d7c]">BAARE, MATT&nbsp; (14</span></div>
          <div class="h-[20px] shrink-0 flex items-center text-[#1a4a8e] bg-linear-to-b from-[#edf4fd] to-[#d8e6f8] whitespace-nowrap"><span class="w-[9px]"></span><span class="w-[48px] text-[11.500px]">10:00 A</span><span class="font-bold text-[12px] text-[#0f3d7c]">CACACE, DOUG&nbsp; (1</span></div>
          <div class="h-[20px] shrink-0 flex items-center text-[#1a4a8e] bg-linear-to-b from-[#edf4fd] to-[#d8e6f8] whitespace-nowrap"><span class="w-[9px]"></span><span class="w-[48px] text-[11.500px]">11:00 A</span><span class="font-bold text-[12px] text-[#0f3d7c]">DABBS, JORGE&nbsp; (8</span></div>
          <div class="h-[20px] shrink-0 flex items-center text-[#1a4a8e] bg-linear-to-b from-[#edf4fd] to-[#d8e6f8] whitespace-nowrap"><span class="w-[9px]"></span><span class="w-[48px] text-[11.500px]">12:00 P</span><span class="font-bold text-[12px] text-[#0f3d7c]">Eade, John&nbsp; (10731</span></div>
          <div class="h-[20px] shrink-0 flex items-center text-[#1a4a8e] bg-linear-to-b from-[#edf4fd] to-[#d8e6f8] whitespace-nowrap"><span class="w-[9px]"></span><span class="w-[48px] text-[11.500px]">01:00 P</span><span class="font-bold text-[12px] text-[#0f3d7c]">GA, John&nbsp; (17575)</span></div>
          <div class="h-[18px] shrink-0 flex items-center pl-[8px] font-bold text-[9.500px] text-[#c9dcf6] bg-linear-to-b from-[#0e4a96] via-[#1f63b8] to-[#8fb3e6] whitespace-pre">Appointment(s): 6   No Show: 6</div>

          <div class="flex-1"></div>
          <div class="h-[20px] shrink-0 flex items-center justify-end pr-[18px] pt-[3px] gap-[3px] font-bold text-[12px] text-white bg-linear-to-b from-[#0a3c7a] to-[#4a82c8]">Option<div class="w-0 h-0 border-x-[8px] border-x-transparent border-t-[7px] border-t-white"></div></div>
          <div class="h-[17px] shrink-0 flex bg-[#fbfbf8]">
            <div class="w-[16px] bg-[#c3d4f8] border border-white rounded-[2px] flex items-center justify-center"><svg class="w-[8px] h-[8px]" viewBox="0 0 8 8"><path d="M6 0L2 4l4 4" fill="none" stroke="#4d6185" stroke-width="2"/></svg></div>
            <div class="w-[98px] bg-[#c2d3fa] border border-[#e8eefc] rounded-[2px] flex items-center justify-center"><div class="w-[8px] h-[7px] bg-[repeating-linear-gradient(90deg,#8ca0cc_0_1px,transparent_1px_2px)]"></div></div>
            <div class="ml-auto w-[16px] bg-[#c3d4f8] border border-white rounded-[2px] flex items-center justify-center"><svg class="w-[8px] h-[8px]" viewBox="0 0 8 8"><path d="M2 0l4 4-4 4" fill="none" stroke="#4d6185" stroke-width="2"/></svg></div>
          </div>
        </div>

        <!-- schedule grid -->
        <div class="ml-[3px] w-[729px] h-full border border-black flex flex-col bg-white overflow-hidden">
          <div class="h-[19px] shrink-0 bg-linear-to-b from-white to-[#d4d0c8]"></div>
          <div class="flex-1"></div>
          <div class="h-[20px] shrink-0 flex items-center pl-[3px] pr-[23px] text-[11px] tracking-[-0.2px] text-[#dbe6f8] whitespace-pre bg-linear-to-b from-[#0a3c7a] to-[#4a82c8]">I= Chk In  R= In Room O= Chk Out  A= Autho. Status  N= Note  T= Visit Status  V= Vital  B= Super Bill  S= Signed Off<span class="ml-auto font-bold text-[12px] tracking-normal text-white">Option</span><div class="ml-[3px] w-0 h-0 border-x-[8px] border-x-transparent border-t-[7px] border-t-white"></div></div>
          <div class="h-[17px] shrink-0 flex bg-[#fbfbf8]">
            <div class="w-[17px] bg-[#c3d4f8] border border-white rounded-[2px] flex items-center justify-center"><svg class="w-[8px] h-[8px]" viewBox="0 0 8 8"><path d="M6 0L2 4l4 4" fill="none" stroke="#4d6185" stroke-width="2"/></svg></div>
            <div class="w-[430px] bg-[#c2d3fa] border border-[#e8eefc] rounded-[2px] flex items-center justify-center"><div class="w-[8px] h-[7px] bg-[repeating-linear-gradient(90deg,#8ca0cc_0_1px,transparent_1px_2px)]"></div></div>
            <div class="ml-auto w-[16px] bg-[#c3d4f8] border border-white rounded-[2px] flex items-center justify-center"><svg class="w-[8px] h-[8px]" viewBox="0 0 8 8"><path d="M2 0l4 4-4 4" fill="none" stroke="#4d6185" stroke-width="2"/></svg></div>
          </div>
        </div>

        <!-- side panel -->
        <div class="ml-[4px] w-[87px] flex flex-col">
          <div class="h-[106px] mt-px shrink-0 relative flex items-center justify-center pb-[4px] border border-[#7fa0cc] bg-linear-to-r from-[#c2d5ee] via-[#d5e5fb] to-[#b9cde8] font-bold text-[23.500px] text-[#1f4e96]">PHOTO<div class="absolute top-[2px] right-[3px] w-0 h-0 border-x-[5px] border-x-transparent border-t-[5px] border-t-[#0f3d7c]"></div></div>
          <div class="mt-[12px] h-[324px] shrink-0 flex flex-col pr-[3px] border border-[#6f94c4] bg-linear-to-r from-[#bdd0ea] via-[#d5e5fb] to-[#b9cde8] font-bold text-[12px] leading-[13px] text-center">
            <div class="h-[132px] shrink-0 grid grid-cols-2 border-b border-[#3f6aa8]">
              <div class="flex flex-col items-center pt-[4px]"><svg class="w-[32px] h-[32px]"><use href="#man"/><path d="M21 21h4v-4h4v4h3v4h-3v4h-4v-4h-4z" fill="#17a838" stroke="#0b6a1f" stroke-width=".5"/></svg><span class="mt-[2px]">Walk<br>In</span></div>
              <div class="flex flex-col items-center pt-[4px]"><svg class="w-[32px] h-[32px]"><use href="#man"/><circle cx="23" cy="22" r="8.500" fill="#2a9a3a" stroke="#e8f4e8"/><path d="M19 22l3 3 6-6" fill="none" stroke="#fff" stroke-width="2"/></svg><span class="mt-[2px]">In<br>Room</span></div>
              <div class="flex flex-col items-center pt-[3px]"><svg class="w-[32px] h-[32px]"><use href="#redman"/></svg><span class="mt-[3px]">Check<br>Out</span></div>
              <div class="flex flex-col items-center pt-[3px]"><svg class="w-[32px] h-[32px]"><use href="#man"/><path d="M18 18l12 12M30 17L18 30" stroke="#ee8a20" stroke-width="3.500"/></svg><span class="mt-[3px]">Delete</span></div>
            </div>
            <div class="h-[73px] shrink-0 grid grid-cols-2 border-b border-[#3f6aa8]">
              <div class="flex flex-col items-center pt-[6px]"><svg class="w-[32px] h-[32px]"><use href="#moveup"/></svg><span class="mt-[6px]">Move<br>Up</span></div>
              <div class="flex flex-col items-center pt-[6px]"><svg class="w-[32px] h-[32px]"><use href="#movedown"/></svg><span class="mt-[6px]">Move<br>Down</span></div>
            </div>
            <div class="flex-1 grid grid-cols-2">
              <div class="flex flex-col items-center pt-[5px]"><svg class="w-[32px] h-[32px]"><use href="#man"/><path d="M22 19h6l-1 3q5 3 4 9H20q-1-6 4-9z" fill="#e8a020" stroke="#8a5a10" stroke-width=".6"/></svg><span class="mt-[5px]">Copay</span></div>
              <div class="flex flex-col items-center pt-[5px]"><svg class="w-[32px] h-[32px]"><use href="#kit"/></svg><span class="mt-[5px]">Vitals</span></div>
              <div class="flex flex-col items-center pt-[1px]"><svg class="w-[32px] h-[32px]"><use href="#bill"/></svg><span class="mt-[5px]">Super<br>Bill</span></div>
              <div class="flex flex-col items-center pt-[1px]"><svg class="w-[32px] h-[32px]"><use href="#printer"/></svg><span class="mt-[5px]">Print</span></div>
            </div>
          </div>
        </div>
      </div>
    </div>
  </div>

  <!-- status bar -->
  <div class="h-[19px] shrink-0 flex items-center border-t-2 border-t-[#b9b6a6] text-[11px]">
    <div class="w-[378px] pl-[2px]">Ready</div>
    <div class="w-[89px] h-full border-l border-[#7f9db9]"></div>
    <div class="w-[198px] h-full border-l border-[#7f9db9] flex items-center justify-center font-bold text-[#0000ee]">system</div>
    <div class="w-[105px] h-full border-l border-[#7f9db9] flex items-center justify-center">*Ver: 12.0.5.0331</div>
    <div class="w-[133px] h-full border-l border-[#7f9db9] flex items-center justify-center">hp - 0030022</div>
    <div class="w-[18px] h-full border-l border-[#7f9db9] flex items-center justify-center"><svg class="w-[17px] h-[16px]" viewBox="0 0 20 20"><rect x="1" y="3" width="13" height="12" fill="#cfe1f8" stroke="#2a62c8"/><path d="M3 7h9M3 10h9" stroke="#2a62c8"/><circle cx="14" cy="9" r="3.500" fill="#f7a72a"/><path d="M8 19q0-6 6-6t6 6z" fill="#2a72d8"/></svg></div>
    <div class="flex-1 h-full border-l border-[#7f9db9] flex items-center justify-center">11-3-13 12:31:23</div>
  </div>

  <!-- taskbar -->
  <div class="flex-1 flex items-stretch border-t border-[#3a78e0] bg-linear-to-b from-[#2a68dc] via-[#245edb] to-[#1c4ec4] text-white">
    <div class="w-[97px] flex items-center pl-[9px] rounded-r-[10px] bg-linear-to-b from-[#5aa55a] via-[#3d8f3d] to-[#2f7a2f] shrink-0">
      <svg class="w-[20px] h-[20px]" viewBox="0 0 20 20"><path d="M2 4q3-2 7 0l-1 6q-4-2-7 0z" fill="#e8501c"/><path d="M10 4q4 2 8 0l-1 6q-4 2-8 0z" fill="#6ab82a"/><path d="M1 11q3-2 7 0l-1 6q-4-2-7 0z" fill="#3a78e0"/><path d="M9 11q4 2 8 0l-1 6q-4 2-8 0z" fill="#f7c21c"/></svg>
      <span class="ml-[5px] font-bold italic text-[18px] leading-none">start</span>
    </div>
    <div class="ml-[9px] mt-[3px] mb-[2px] w-[160px] flex items-center pl-[10px] rounded-[3px] bg-[#1e52b7] border border-[#1a46a0] text-[11px] shrink-0">
      <svg class="w-[18px] h-[18px] shrink-0"><use href="#ims"/></svg>
      <span class="ml-[2px] whitespace-nowrap">IMS (FOR, SleepMedi...</span>
    </div>
    <div class="ml-auto flex items-center text-[11px] text-[#8fb0e8]">Desktop<span class="ml-[11px] mb-[8px] text-[11px] leading-none text-[#a9c3f0]">»</span></div>
    <div class="ml-[14px] w-[111px] shrink-0 relative flex items-center bg-linear-to-b from-[#16a0ea] to-[#0e8adc] border-l border-[#0c5fb0] pl-[11px]">
      <div class="absolute left-[-8px] top-[6px] w-[18px] h-[18px] rounded-full bg-[#3a8ce8] border border-white flex items-center justify-center"><svg class="w-[8px] h-[10px]" viewBox="0 0 8 10"><path d="M6 1L2 5l4 4" fill="none" stroke="#fff" stroke-width="2"/></svg></div>
      <svg class="w-[16px] h-[16px]" viewBox="0 0 16 16"><circle cx="8" cy="3" r="3" fill="#f7a21c" stroke="#5a3a08" stroke-width=".6"/><circle cx="8" cy="13" r="3" fill="#f7a21c" stroke="#5a3a08" stroke-width=".6"/><circle cx="3" cy="6" r="3" fill="#f7a21c" stroke="#5a3a08" stroke-width=".6"/><circle cx="13" cy="6" r="3" fill="#f7a21c" stroke="#5a3a08" stroke-width=".6"/><circle cx="3" cy="11" r="3" fill="#f7a21c" stroke="#5a3a08" stroke-width=".6"/><circle cx="13" cy="11" r="3" fill="#f7a21c" stroke="#5a3a08" stroke-width=".6"/><circle cx="8" cy="8" r="2.500" fill="#5a3a08"/></svg>
      <svg class="ml-[4px] w-[12px] h-[16px]" viewBox="0 0 12 16"><rect x="1" y="0" width="10" height="16" rx="5" fill="#1c2ea8"/><path d="M3 5l6 6-3 3V2l3 3-6 6" fill="none" stroke="#ee2020" stroke-width="1.200"/></svg>
      <span class="ml-[11px] text-[11px] text-white whitespace-nowrap">12:31 PM</span>
    </div>
  </div>

  <!-- Patient's Alert dialog -->
  <div class="absolute left-[172px] top-[119px] w-[681px] h-[531px] flex flex-col rounded-t-[7px] bg-[#0a4fd8] shadow-[1px_1px_0_#0a2f9a]">
    <div class="h-[27px] shrink-0 flex items-center pt-[3px] pl-[4px] pr-[5px] rounded-t-[7px] bg-linear-to-b from-[#1a72f0] via-[#0453e0] to-[#0a55dc]">
      <svg class="w-[18px] h-[18px]"><use href="#ims"/></svg>
      <span class="ml-[2px] text-[13px] font-bold text-white">Patient's Alert</span>
      <div class="ml-auto flex gap-[3px]">
        <div class="w-[20px] h-[20px] rounded-[3px] border border-white bg-[#2a62dc] flex items-center justify-center font-bold text-[15px] text-white">?</div>
        <div class="w-[20px] h-[20px] rounded-[3px] border border-white bg-[#d8512c] flex items-center justify-center"><svg class="w-[12px] h-[12px]" viewBox="0 0 12 12"><path d="M1 1l10 10M11 1L1 11" stroke="#fff" stroke-width="2"/></svg></div>
      </div>
    </div>

    <div class="mx-[4px] mb-[4px] flex-1 min-h-0 flex flex-col bg-[#abcaf0]">
      <!-- note group -->
      <div class="mt-[7px] mr-[2px] h-[313px] shrink-0 flex flex-col border border-[#c5d2d8] rounded-[3px]">
        <div class="-mt-[7px] h-[13px] shrink-0"><span class="ml-[7px] mt-[1px] px-px bg-[#abcaf0] font-bold text-[12px] leading-[13px] block w-fit text-[#000080]">Note:</span></div>
        <div class="w-[665px] h-[304px] border border-black flex flex-col bg-white">
          <div class="h-[19px] shrink-0 flex font-bold text-[11.500px] tracking-[0.3px] bg-linear-to-b from-white to-[#d4d0c8] border-b border-[#aca899]">
            <div class="w-[41px] flex items-center justify-center border-r border-[#aca899]">Alert</div>
            <div class="w-[44px] flex items-center justify-center border-x border-x-white border-r-[#aca899]">Active</div>
            <div class="w-[77px] flex items-center justify-center border-x border-x-white border-r-[#aca899]">Date</div>
            <div class="w-[143px] flex items-center pl-[4px] border-x border-x-white border-r-[#aca899]">Type</div>
            <div class="w-[285px] flex items-center pl-[5px] border-x border-x-white border-r-[#aca899]">Note</div>
            <div class="w-[21px] flex items-center justify-center border-x border-x-white border-r-[#aca899]">B</div>
            <div class="w-[23px] flex items-center justify-center border-x border-x-white border-r-[#aca899]">T</div>
            <div class="flex-1"></div>
          </div>
          <div class="flex-1 flex flex-col justify-end items-end pr-[23px] pb-[1px] text-[#0000ee] text-[11px] tracking-[-0.1px] whitespace-pre">B= Billed  T= To be billed</div>
        </div>
      </div>

      <!-- health maintenance group -->
      <div class="mt-[10px] mr-[2px] h-[139px] shrink-0 flex flex-col border border-[#c5d2d8] rounded-[3px]">
        <div class="-mt-[7px] h-[13px] shrink-0"><span class="ml-[7px] px-px bg-[#abcaf0] font-bold text-[12px] leading-[13px] block w-fit text-[#000080]">Health Maintenance:</span></div>
        <div class="w-[665px] h-[129px] border border-black flex flex-col bg-white">
          <div class="h-[19px] shrink-0 flex font-bold text-[11.500px] tracking-[0.3px] bg-linear-to-b from-white to-[#d4d0c8] border-b border-[#aca899]">
            <div class="w-[22px] border-r border-[#aca899]"></div>
            <div class="w-[55px] flex items-center justify-center border-x border-x-white border-r-[#aca899]">Date</div>
            <div class="w-[173px] flex items-center pl-[4px] border-x border-x-white border-r-[#aca899]">Task</div>
            <div class="w-[19px] border-x border-x-white border-r-[#aca899]"></div>
            <div class="w-[63px] flex items-center pl-[5px] border-x border-x-white border-r-[#aca899]">Due By</div>
            <div class="w-[123px] flex items-center pl-[5px] border-x border-x-white border-r-[#aca899]">Assigned To</div>
            <div class="w-[18px] flex items-center justify-center border-x border-x-white border-r-[#aca899]">S</div>
            <div class="flex-1 flex items-center pl-[5px]">Note</div>
          </div>
          <div class="h-[21px] shrink-0 flex items-center text-[11.500px] text-[#ee0000] border-b-2 border-[#808080] whitespace-nowrap">
            <span class="w-[25px] pl-[6px] font-bold">&gt;</span>
            <span class="w-[56px]">01/11/10</span>
            <span class="w-[195px]">Sleep Study Due</span>
            <span class="w-[58px]">01/11/10</span>
            <span class="w-[124px]">Nursing Staff</span>
            <span class="font-bold text-[12px] text-black">P</span>
          </div>
          <div class="flex-1 flex items-end pl-[3px] pb-[1px] text-[11px] whitespace-pre text-[#0000ee]">
            <span class="font-bold text-[12px]">S </span><span class="ml-[2px] tracking-[-0.25px]">= P - Pending, I - In Progress, E - Deferred</span>
            <span class="ml-[5px] tracking-[-0.25px] text-[#ee0000]">Previous Task :</span><span class="ml-[9px] font-bold text-[12px] text-[#ee0000]">(1)</span>
            <span class="ml-[6px] text-[#000080]">Today's Task :</span><span class="ml-[6px] font-bold text-[12px] text-[#000080]">(0)</span>
            <span class="ml-[6px] tracking-[-0.1px] text-[#800000]">Future Task :</span><span class="ml-[5px] font-bold text-[12px] text-[#800000]">(0)</span>
            <svg class="ml-[6px] w-[16px] h-[16px]" viewBox="0 0 16 16"><path d="M2 3l4-2 9 10-3 4-4-1z" fill="#7db4ee" stroke="#1c70c8"/><ellipse cx="8" cy="8" rx="3" ry="4" fill="#fff" stroke="#1c70c8" transform="rotate(-40 8 8)"/></svg>
            <span class="ml-[2px]">Linked Rx/Lab/Diagnostic</span>
          </div>
        </div>
      </div>

      <!-- dialog buttons -->
      <div class="mt-[6px] ml-auto mr-[2px] w-[160px] h-[26px] flex items-center justify-center gap-[4px] border border-[#c5d2d8] rounded-[3px]">
        <div class="w-[75px] h-[22px] flex items-center rounded-[3px] border border-[#1f3f6e] bg-linear-to-b from-[#fbfbf8] to-[#e6e4d8] font-bold text-[12px]"><svg class="ml-[2px] w-[18px] h-[17px]" viewBox="0 0 18 17"><path d="M1 9l5 6L16 1" fill="none" stroke="#1c50b8" stroke-width="2.500"/></svg><span class="ml-[9px]">Ok</span></div>
        <div class="w-[75px] h-[22px] flex items-center rounded-[3px] border border-[#1f3f6e] bg-linear-to-b from-[#fbfbf8] to-[#e6e4d8] font-bold text-[12px]"><svg class="ml-[3px] w-[15px] h-[15px]" viewBox="0 0 15 15"><path d="M1 1l13 13M14 1L1 14" stroke="#d82020" stroke-width="2"/></svg><span class="ml-[3px]">Cancel</span></div>
      </div>
    </div>
  </div>
</div>
</body>
</html>
